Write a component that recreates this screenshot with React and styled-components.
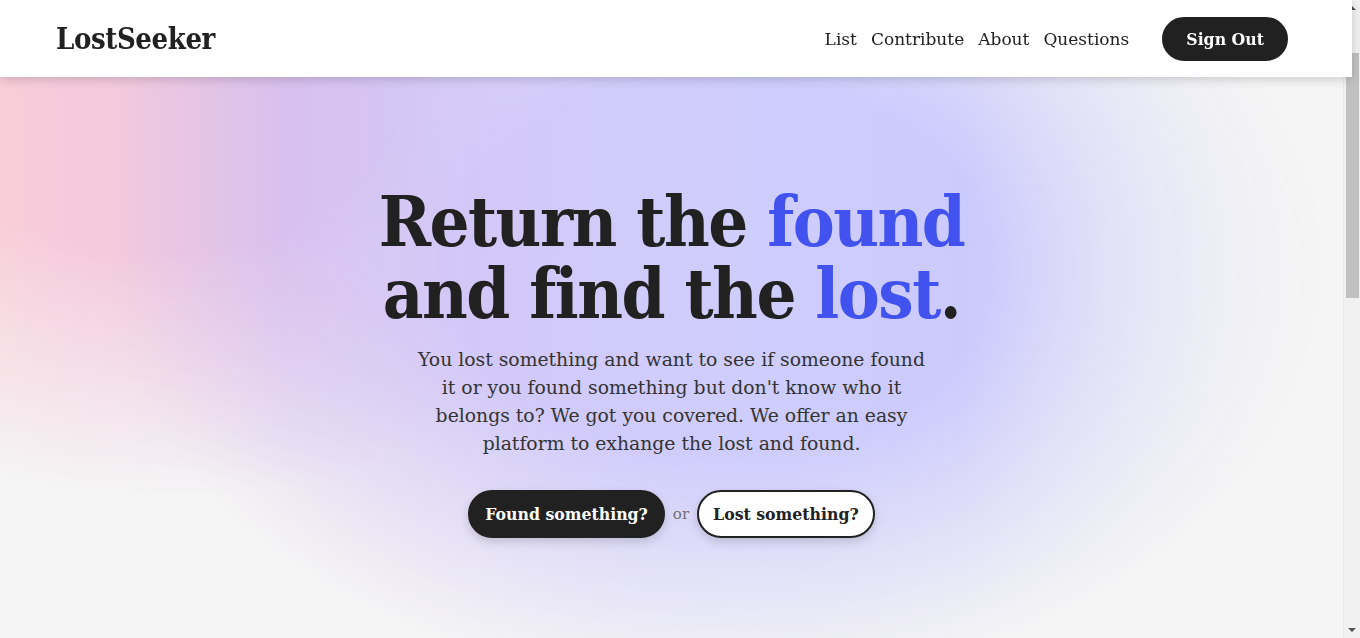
import React from "react";
import styled, { createGlobalStyle } from "styled-components";

const GlobalStyle = createGlobalStyle`
  * { box-sizing: border-box; }
  html, body {
    margin: 0;
    padding: 0;
    background: #f5f5f5;
    color: #212121;
    font-family: "DejaVu Serif", serif;
  }
`;

const condensed = `"DejaVu Serif Condensed", "DejaVu Serif", serif`;

const Header = styled.header`
  position: sticky;
  top: 0;
  z-index: 10;
  height: 77px;
  margin-right: 8px;
  background: #ffffff;
  box-shadow: 0 2px 10px rgba(0, 0, 0, 0.18);
  display: flex;
  align-items: center;
  justify-content: space-between;
  padding: 0 64px 0 56px;
`;

const Logo = styled.a`
  font-family: ${condensed};
  font-size: 29px;
  font-weight: 700;
  letter-spacing: -0.4px;
  color: #212121;
  text-decoration: none;
`;

const Nav = styled.nav`
  display: flex;
  align-items: center;
`;

const NavLink = styled.a`
  font-size: 17px;
  color: #212121;
  text-decoration: none;
  margin-left: 14px;
  cursor: pointer;
`;

const PillButton = styled.button`
  height: ${(p) => p.$h || 48}px;
  padding: 0 ${(p) => p.$px || 16}px;
  border-radius: 999px;
  border: 2px solid #212121;
  background: ${(p) => (p.$light ? "#ffffff" : "#212121")};
  color: ${(p) => (p.$light ? "#212121" : "#ffffff")};
  font-family: ${condensed};
  font-size: 17.5px;
  font-weight: 700;
  cursor: pointer;
  box-shadow: ${(p) => (p.$shadow ? "0 4px 10px rgba(0,0,0,0.15)" : "none")};
`;

const SignOut = styled(PillButton)`
  margin-left: 33px;
`;

const Main = styled.main`
  padding-right: 17px;
`;

const Hero = styled.section`
  position: relative;
  min-height: calc(100vh - 77px);
  display: flex;
  flex-direction: column;
  align-items: center;
  justify-content: center;
  padding-top: 8px;
  background: #f5f5f5;
  overflow: hidden;

  &::before {
    content: "";
    position: absolute;
    inset: 0;
    background: linear-gradient(
      90deg,
      #f8ccd8 0%,
      #f4c9dc 8%,
      #d8c0ee 21%,
      #d2c8f8 35%,
      #cfcdfc 55%,
      #cbcafc 72%,
      #dcdcf8 88%,
      #efeff5 100%
    );
    -webkit-mask-image:
      radial-gradient(ellipse 610px 420px at 720px 190px, #000 45%, transparent 100%),
      radial-gradient(ellipse 560px 420px at 160px 0px, #000 42%, transparent 100%);
    mask-image:
      radial-gradient(ellipse 610px 420px at 720px 190px, #000 45%, transparent 100%),
      radial-gradient(ellipse 560px 420px at 160px 0px, #000 42%, transparent 100%);
  }

  & > * {
    position: relative;
  }
`;

const Title = styled.h1`
  margin: 0;
  font-family: ${condensed};
  font-size: 70px;
  font-weight: 700;
  letter-spacing: -1.5px;
  line-height: 72px;
  text-align: center;
  color: #212121;
`;

const Accent = styled.span`
  color: #4152ee;
`;

const Lead = styled.p`
  margin: 16px 0 0;
  max-width: 515px;
  font-size: 18.8px;
  line-height: 28px;
  text-align: center;
  color: #333333;
`;

const Actions = styled.div`
  margin-top: 32px;
  display: flex;
  align-items: center;
  gap: 8px;
`;

const Or = styled.span`
  font-size: 15px;
  color: #6f6f6f;
`;

const Below = styled.section`
  height: 1300px;
`;

/* stand-in for the browser's page scrollbar */
const ScrollTrack = styled.div`
  position: fixed;
  top: 0;
  right: 0;
  bottom: 0;
  width: 17px;
  z-index: 5;
  background: #f1f1f1;
  border-left: 1px solid #e8e8e8;
  display: flex;
  flex-direction: column;
  align-items: center;
`;

const Arrow = styled.div`
  width: 0;
  height: 0;
  margin: 6px 0;
  border-left: 4px solid transparent;
  border-right: 4px solid transparent;
  ${(p) => (p.$down ? "border-top: 4px solid #505050;" : "border-bottom: 4px solid #505050;")}
`;

const Thumb = styled.div`
  width: 13px;
  height: 245px;
  margin-top: 37px;
  background: #c1c1c1;
`;

const Spacer = styled.div`
  flex: 1;
`;

export default function App() {
  return (
    <>
      <GlobalStyle />
      <Header>
        <Logo>LostSeeker</Logo>
        <Nav>
          <NavLink>List</NavLink>
          <NavLink>Contribute</NavLink>
          <NavLink>About</NavLink>
          <NavLink>Questions</NavLink>
          <SignOut $h={44} $px={22}>Sign Out</SignOut>
        </Nav>
      </Header>
      <Main>
        <Hero>
          <Title>
            Return the <Accent>found</Accent>
            <br />
            and find the <Accent>lost</Accent>.
          </Title>
          <Lead>
            You lost something and want to see if someone found it or you
            found something but don't know who it belongs to? We got you
            covered. We offer an easy platform to exhange the lost and found.
          </Lead>
          <Actions>
            <PillButton $shadow $px={15}>Found something?</PillButton>
            <Or>or</Or>
            <PillButton $light $shadow $px={14}>Lost something?</PillButton>
          </Actions>
        </Hero>
        <Below />
      </Main>
      <ScrollTrack>
        <Arrow />
        <Thumb />
        <Spacer />
        <Arrow $down />
      </ScrollTrack>
    </>
  );
}
